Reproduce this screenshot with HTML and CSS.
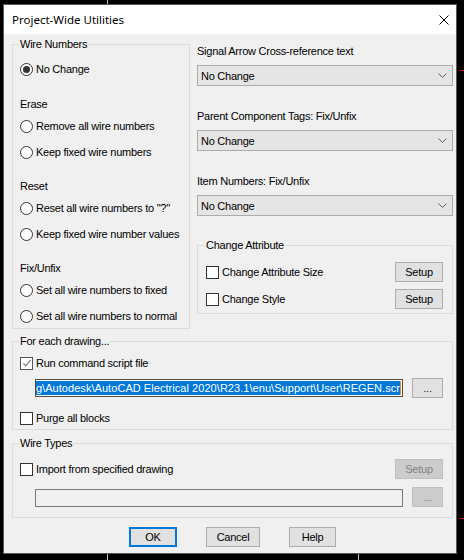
FILE: index.html
```html
<!DOCTYPE html>
<html lang="en">
<head>
    <meta charset="UTF-8">
    <meta name="viewport" content="width=device-width, initial-scale=1.0">
    <title>Project-Wide Utilities</title>
    <link rel="stylesheet" href="styles.css">
</head>
<body>

    <!-- bits of the drawing crosshair showing behind the dialog -->
    <span class="cross cross-top"></span>
    <span class="cross cross-bottom-a"></span>
    <span class="cross cross-bottom-b"></span>
    <span class="cross cross-red-a"></span>
    <span class="cross cross-red-b"></span>

    <div class="dialog">
        <div class="titlebar">
            <span class="title">Project-Wide Utilities</span>
            <svg class="close" width="10" height="10" viewBox="0 0 10 10">
                <path d="M0.5 0.5 L9.5 9.5 M9.5 0.5 L0.5 9.5" stroke="#000" stroke-width="1" fill="none"/>
            </svg>
        </div>

        <div class="client">
            <div class="top">
                <fieldset class="group wire-numbers">
                    <legend>Wire Numbers</legend>
                    <label class="opt"><input type="radio" name="wireNumbers" checked>No Change</label>

                    <div class="section">Erase</div>
                    <label class="opt"><input type="radio" name="wireNumbers">Remove all wire numbers</label>
                    <label class="opt"><input type="radio" name="wireNumbers">Keep fixed wire numbers</label>

                    <div class="section">Reset</div>
                    <label class="opt"><input type="radio" name="wireNumbers">Reset all wire numbers to "?"</label>
                    <label class="opt"><input type="radio" name="wireNumbers">Keep fixed wire number values</label>

                    <div class="section">Fix/Unfix</div>
                    <label class="opt"><input type="radio" name="wireNumbers">Set all wire numbers to fixed</label>
                    <label class="opt"><input type="radio" name="wireNumbers">Set all wire numbers to normal</label>
                </fieldset>

                <div class="fields">
                    <div class="field-label">Signal Arrow Cross-reference text</div>
                    <div class="combo">
                        <span>No Change</span>
                        <svg width="9" height="5" viewBox="0 0 9 5"><path d="M0.5 0.5 L4.5 4.5 L8.5 0.5" fill="none" stroke="#606060"/></svg>
                    </div>

                    <div class="field-label">Parent Component Tags: Fix/Unfix</div>
                    <div class="combo">
                        <span>No Change</span>
                        <svg width="9" height="5" viewBox="0 0 9 5"><path d="M0.5 0.5 L4.5 4.5 L8.5 0.5" fill="none" stroke="#606060"/></svg>
                    </div>

                    <div class="field-label">Item Numbers: Fix/Unfix</div>
                    <div class="combo">
                        <span>No Change</span>
                        <svg width="9" height="5" viewBox="0 0 9 5"><path d="M0.5 0.5 L4.5 4.5 L8.5 0.5" fill="none" stroke="#606060"/></svg>
                    </div>

                    <fieldset class="group change-attr">
                        <legend>Change Attribute</legend>
                        <div class="row">
                            <label class="chk"><input type="checkbox">Change Attribute Size</label>
                            <button class="btn setup">Setup</button>
                        </div>
                        <div class="row row-2">
                            <label class="chk"><input type="checkbox">Change Style</label>
                            <button class="btn setup">Setup</button>
                        </div>
                    </fieldset>
                </div>
            </div>

            <fieldset class="group for-each">
                <legend>For each drawing...</legend>
                <label class="chk line"><input type="checkbox" checked>Run command script file</label>
                <div class="path-row">
                    <div class="path focused">
                        <span class="selected">g\Autodesk\AutoCAD Electrical 2020\R23.1\enu\Support\User\REGEN.scr</span>
                        <span class="caret"></span>
                    </div>
                    <button class="btn browse">...</button>
                </div>
                <label class="chk line purge"><input type="checkbox">Purge all blocks</label>
            </fieldset>

            <fieldset class="group wire-types">
                <legend>Wire Types</legend>
                <div class="row">
                    <label class="chk"><input type="checkbox">Import from specified drawing</label>
                    <button class="btn setup" disabled>Setup</button>
                </div>
                <div class="path-row bottom">
                    <div class="path"></div>
                    <button class="btn browse" disabled>...</button>
                </div>
            </fieldset>

            <div class="actions">
                <button class="btn ok">OK</button>
                <button class="btn cancel">Cancel</button>
                <button class="btn help">Help</button>
            </div>
        </div>
    </div>

</body>
</html>
```

FILE: styles.css
```css
body {
    margin: 0;
    width: 464px;
    height: 560px;
    background-color: #000;
    position: relative;
    overflow: hidden;
    font-family: "Liberation Sans", Arial, sans-serif;
    font-size: 11px;
    letter-spacing: -0.25px;
    color: #000;
}

/* crosshair lines of the drawing underneath */
.cross {
    position: absolute;
    background-color: #bdbdbd;
}
.cross-top { left: 107px; top: 0; width: 1px; height: 4px; }
.cross-bottom-a { left: 107px; top: 554px; width: 1px; height: 6px; }
.cross-bottom-b { left: 358px; top: 554px; width: 1px; height: 6px; }
.cross-red-a { left: 459px; top: 70px; width: 5px; height: 1px; background-color: #e01010; }
.cross-red-b { left: 459px; top: 518px; width: 5px; height: 1px; background-color: #e01010; }

.dialog {
    margin: 4px 0 0 3px;
    width: 454px;
    height: 550px;
    box-sizing: border-box;
    border: 1px solid #5a5a5a;
    display: flex;
    flex-direction: column;
    background-color: #f0f0f0;
}

.titlebar {
    height: 29px;
    flex-shrink: 0;
    background-color: #fff;
    display: flex;
    align-items: center;
    justify-content: space-between;
    padding-left: 8px;
}
.title {
    font-family: "Noto Sans", "Liberation Sans", sans-serif;
    font-size: 11.5px;
    letter-spacing: 0;
}
.close {
    margin-right: 7px;
}

.client {
    flex: 1;
    padding: 3px 3px 0 8px;
}

.top {
    display: grid;
    grid-template-columns: 178px 256px;
    column-gap: 7px;
    align-items: start;
}

/* group boxes */
.group {
    margin: 0;
    min-width: 0;
    border: 1px solid #dcdcdc;
    padding: 7px 9px 1px 7px;
}
.group legend {
    padding: 0 1px;
    margin-left: -1px;
    line-height: 14px;
}

.opt, .section {
    height: 22px;
    display: flex;
    align-items: center;
}
.opt + .opt {
    margin-top: 4px;
}
.section {
    margin-top: 12px;
}
.opt:first-of-type + .section {
    margin-top: 13px;
}

input[type="radio"], input[type="checkbox"] {
    appearance: none;
    margin: 0 3px 0 0;
    width: 13px;
    height: 13px;
    box-sizing: border-box;
    border: 1px solid #333;
    background-color: #fff;
    flex-shrink: 0;
    display: grid;
    place-content: center;
}
input[type="radio"] {
    border-radius: 50%;
}
input[type="radio"]:checked::before {
    content: "";
    width: 7px;
    height: 7px;
    border-radius: 50%;
    background-color: #333;
}
input[type="checkbox"]:checked {
    border-color: #555;
}
input[type="checkbox"]:checked::before {
    content: "";
    width: 3px;
    height: 7px;
    border: solid #666;
    border-width: 0 1px 1px 0;
    transform: translate(0, -1px) rotate(40deg);
}

.chk {
    display: flex;
    align-items: center;
}
.chk.line {
    height: 16px;
}
.purge {
    margin-top: 12px;
}

/* right hand column */
.fields {
    padding-top: 7px;
}
.field-label {
    line-height: 14px;
    margin-bottom: 7px;
}
.combo + .field-label {
    margin-top: 23px;
}
.combo {
    height: 21px;
    box-sizing: border-box;
    border: 1px solid #acacac;
    background-color: #e5e5e5;
    display: flex;
    align-items: center;
    justify-content: space-between;
    padding: 0 5px 0 3px;
}

.change-attr {
    margin-top: 22px;
    padding: 10px 9px 4px 8px;
}
.row {
    height: 20px;
    display: flex;
    align-items: center;
    justify-content: space-between;
}
.row-2 {
    margin-top: 7px;
}

/* buttons */
.btn {
    height: 20px;
    box-sizing: border-box;
    border: 1px solid #adadad;
    background-color: #e1e1e1;
    font: inherit;
    letter-spacing: inherit;
    color: #000;
    padding: 0;
}
.btn:disabled {
    background-color: #cccccc;
    border-color: #bfbfbf;
    color: #838383;
}
.setup {
    width: 48px;
}
.browse {
    width: 31px;
    color: #3a0a5a;
}

/* path text boxes */
.for-each {
    margin-top: 5px;
    padding: 7px 9px 3px 7px;
}
.path-row {
    display: flex;
    align-items: center;
    gap: 9px;
    margin: 7px 0 0 15px;
    height: 20px;
}
.path-row.bottom {
    align-items: flex-end;
    margin-top: 8px;
}
.path {
    width: 368px;
    height: 18px;
    box-sizing: border-box;
    border: 1px solid #7a7a7a;
    background-color: #f0f0f0;
}
.path.focused {
    border-color: #4d4d4d;
    background-color: #fff;
    padding: 1px;
    display: flex;
    justify-content: flex-end;
    overflow: hidden;
}
.selected {
    white-space: nowrap;
    flex-shrink: 0;
    background-color: #0078d7;
    color: #fff;
    line-height: 14px;
    letter-spacing: 0.05px;
}
.caret {
    width: 1px;
    height: 14px;
    flex-shrink: 0;
    background-color: #f08c1e;
}

.wire-types {
    margin-top: 6px;
    padding: 9px 9px 10px 7px;
}

/* dialog buttons */
.actions {
    display: flex;
    gap: 29px;
    margin-top: 9px;
    padding-left: 117px;
}
.ok {
    width: 48px;
    border: 2px solid #0078d7;
}
.cancel {
    width: 54px;
}
.help {
    width: 47px;
}
```
